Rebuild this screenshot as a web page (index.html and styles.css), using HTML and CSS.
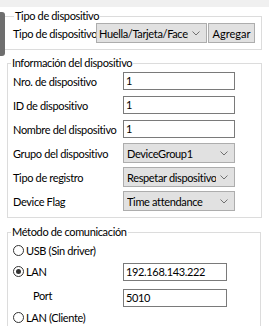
FILE: index.html
```html
<!DOCTYPE html>
<html lang="es">
  <head>
    <meta charset="UTF-8" />
    <title>Dispositivo</title>
    <link rel="stylesheet" href="styles.css">
  </head>
  <body>
    <div class="topbar"></div>
    <div class="side-tab"></div>

    <fieldset class="group group-type">
      <legend>Tipo de dispositivo</legend>
      <div class="type-row">
        <span class="type-label">Tipo de dispositivo</span>
        <div class="combo combo-type">
          <span class="combo-text">Huella/Tarjeta/Facepass</span>
          <svg class="chev" width="8" height="5" viewBox="0 0 8 5"><path d="M0.5 0.5 L4 4 L7.5 0.5" fill="none" stroke="#707070" stroke-width="1"/></svg>
        </div>
        <button class="btn">Agregar</button>
      </div>
    </fieldset>

    <fieldset class="group group-info">
      <legend>Información del dispositivo</legend>
      <div class="row">
        <label>Nro. de dispositivo</label>
        <div class="textbox">1</div>
      </div>
      <div class="row">
        <label>ID de dispositivo</label>
        <div class="textbox">1</div>
      </div>
      <div class="row">
        <label>Nombre del dispositivo</label>
        <div class="textbox">1</div>
      </div>
      <div class="row">
        <label>Grupo del dispositivo</label>
        <div class="combo">
          <span class="combo-text">DeviceGroup1</span>
          <svg class="chev" width="8" height="5" viewBox="0 0 8 5"><path d="M0.5 0.5 L4 4 L7.5 0.5" fill="none" stroke="#707070" stroke-width="1"/></svg>
        </div>
      </div>
      <div class="row">
        <label>Tipo de registro</label>
        <div class="combo">
          <span class="combo-text">Respetar dispositivo</span>
          <svg class="chev" width="8" height="5" viewBox="0 0 8 5"><path d="M0.5 0.5 L4 4 L7.5 0.5" fill="none" stroke="#707070" stroke-width="1"/></svg>
        </div>
      </div>
      <div class="row">
        <label>Device Flag</label>
        <div class="combo">
          <span class="combo-text">Time attendance</span>
          <svg class="chev" width="8" height="5" viewBox="0 0 8 5"><path d="M0.5 0.5 L4 4 L7.5 0.5" fill="none" stroke="#707070" stroke-width="1"/></svg>
        </div>
      </div>
    </fieldset>

    <fieldset class="group group-comm">
      <legend>Método de comunicación</legend>
      <div class="radio-row">
        <span class="radio"></span>
        <span>USB (Sin driver)</span>
      </div>
      <div class="radio-row">
        <span class="radio checked"></span>
        <span class="radio-text">LAN</span>
        <div class="textbox textbox-net">192.168.143.222</div>
      </div>
      <div class="radio-row port-row">
        <span class="port-label">Port</span>
        <div class="textbox textbox-net">5010</div>
      </div>
      <div class="radio-row">
        <span class="radio"></span>
        <span>LAN (Cliente)</span>
      </div>
    </fieldset>
  </body>
</html>
```

FILE: styles.css
```css
:root {
  --frame: #dcdcdc;
  --control: #e1e1e1;
  --control-border: #adadad;
  --text-border: #7a7a7a;
}

* {
  box-sizing: border-box;
}

body {
  margin: 0;
  font-family: "Lato", "Noto Sans", sans-serif;
  font-size: 11px;
  letter-spacing: -0.35px;
  color: #000;
  background: #fff;
  overflow: hidden;
  position: relative;
  height: 326px;
}

.topbar {
  height: 7px;
  background: #f0f0f0;
}

.side-tab {
  position: absolute;
  left: 0;
  top: 12px;
  width: 5px;
  height: 44px;
  background: #6e6e6e;
  border-radius: 0 3px 3px 0;
}

.group {
  border: 1px solid var(--frame);
  margin: 0;
  padding: 0 0 0 5px;
  min-width: 0;
}

.group legend {
  padding: 0 1px;
  margin-left: -2px;
  line-height: 12px;
  white-space: nowrap;
}

.group-type {
  margin: 3px 7px 0 3px;
  padding: 1px 0 6px 9px;
}

.group-type legend {
  margin-left: 1px;
}

.type-row {
  display: flex;
  align-items: center;
  height: 20px;
  white-space: nowrap;
}

.type-label {
  width: 83px;
  flex: none;
}

.combo {
  display: flex;
  align-items: center;
  width: 112px;
  height: 20px;
  flex: none;
  background: var(--control);
  border: 1px solid var(--control-border);
  padding: 0 6px 0 3px;
  overflow: hidden;
}

.combo-text {
  flex: 1;
  white-space: nowrap;
  overflow: hidden;
}

.chev {
  flex: none;
  margin-left: 4px;
}

.combo-type {
  width: 111px;
  padding-left: 2px;
}

.btn {
  font: inherit;
  width: 47px;
  height: 20px;
  flex: none;
  margin-left: 1px;
  background: var(--control);
  border: 1px solid var(--control-border);
  padding: 0;
}

.group-info {
  margin: 7px 7px 0 7px;
  padding-bottom: 4px;
}

.row {
  display: flex;
  align-items: center;
  height: 24px;
  white-space: nowrap;
}

.row label {
  width: 110px;
  flex: none;
}

.textbox {
  width: 112px;
  height: 18px;
  flex: none;
  border: 1px solid var(--text-border);
  background: #fff;
  padding: 0 2px;
  line-height: 16px;
}

.group-comm {
  margin: 8px 8px 0 7px;
  padding-top: 3px;
  padding-bottom: 20px;
}

.radio-row {
  display: flex;
  align-items: center;
  height: 19px;
  white-space: nowrap;
}

.radio-row + .radio-row {
  margin-top: 2px;
}

.radio {
  width: 11px;
  height: 11px;
  flex: none;
  border: 1px solid #333;
  border-radius: 50%;
  margin-right: 2px;
  position: relative;
}

.radio.checked::after {
  content: "";
  position: absolute;
  left: 2px;
  top: 2px;
  width: 5px;
  height: 5px;
  border-radius: 50%;
  background: #333;
}

.radio-text {
  width: 97px;
  flex: none;
}

.port-label {
  width: 110px;
  flex: none;
  padding-left: 20px;
  margin-top: -5px;
}

.textbox-net {
  width: 104px;
}

.radio-row.port-row {
  margin-top: 7px;
  margin-bottom: -1px;
}
```
